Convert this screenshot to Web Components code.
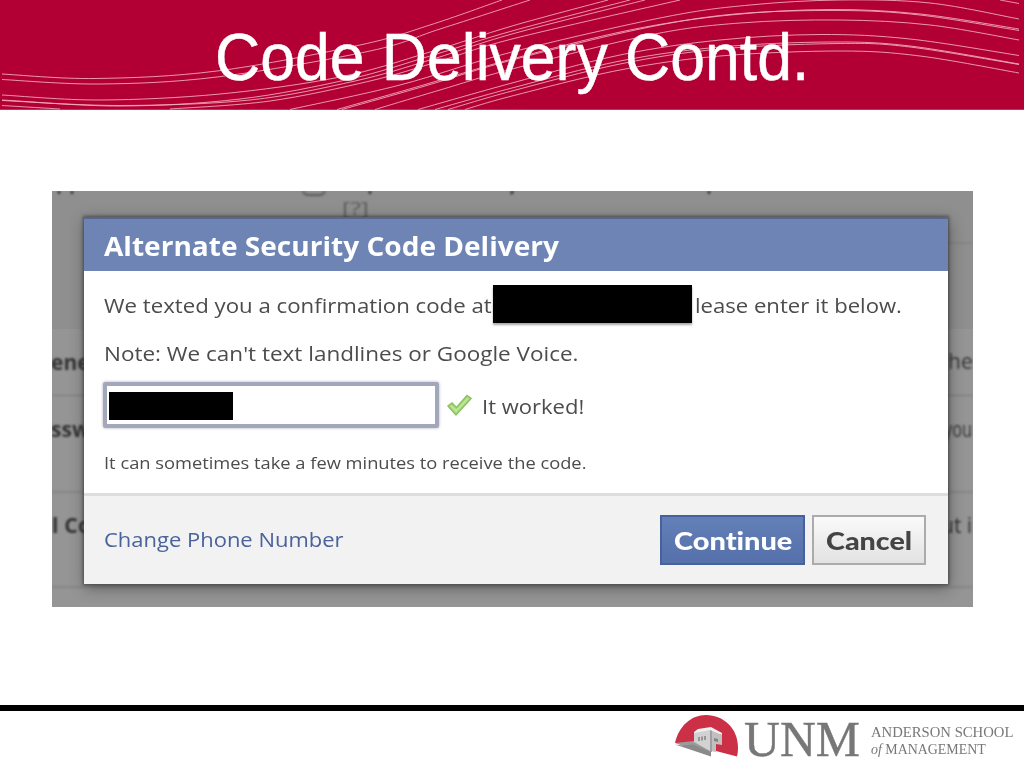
<!DOCTYPE html>
<html lang="en">
<head>
<meta charset="utf-8">
<title>Code Delivery Contd.</title>
<style>
    body {
        margin: 0;
        background: #fff;
        font-family: "Liberation Sans", Arial, sans-serif;
    }
</style>
</head>
<body>
<slide-page>
    <slide-banner slot="banner"><fit-line width="594">Code Delivery Contd.</fit-line></slide-banner>
    <screen-capture>
        <code-dialog>
            <fit-line slot="title" width="455">Alternate Security Code Delivery</fit-line>
            <fb-button slot="actions" kind="confirm"><fit-line width="118">Continue</fit-line></fb-button>
            <fb-button slot="actions"><fit-line width="86">Cancel</fit-line></fb-button>
        </code-dialog>
    </screen-capture>
    <school-logo slot="footer"></school-logo>
</slide-page>

<script>
class SlidePage extends HTMLElement {
    constructor() {
        super();
        this.attachShadow({mode: 'open'}).innerHTML = `
            <style>
                :host {
                    display: flex;
                    flex-direction: column;
                    width: 1024px;
                    height: 768px;
                    overflow: hidden;
                    background: #fff;
                }

                main {
                    flex: 1;
                    padding: 81px 51px 0 52px;
                }

                footer {
                    box-sizing: border-box;
                    height: 63px;
                    border-top: 6px solid #000;
                    display: flex;
                    justify-content: flex-end;
                }
            </style>
            <slot name="banner"></slot>
            <main><slot></slot></main>
            <footer><slot name="footer"></slot></footer>
        `;
    }
}

// Curves of the banner, each a list of points that the stroke runs through
const STRANDS = [
    [2, 74, 95, 78.5, 217, 71, 360, 45, 430, 25, 502, 0],
    [2, 79.5, 100, 84, 217, 77, 370, 51, 440, 29, 530, 0],
    [2, 95, 100, 100, 220, 94, 340, 77, 430, 52, 512, 26, 608, 0],
    [2, 100, 120, 106, 240, 99, 350, 79, 430, 56, 512, 31, 630, 0],
    [2, 100.5, 120, 105.5, 250, 100, 355, 81, 430, 60, 512, 34, 645, 0],
    [2, 105.5, 60, 109],
    [170, 109, 270, 101, 370, 81, 440, 61, 512, 39, 680, 0],
    [290, 109.5, 400, 85, 512, 52, 665, 17, 750, 5, 840, 0, 930, 3, 1019, 19],
    [337, 109.5, 420, 86, 512, 59, 630, 30, 730, 15, 830, 9.5, 920, 14, 1019, 29],
    [342, 109.5, 425, 86, 512, 60, 640, 29, 735, 14, 840, 10.5, 920, 15, 1019, 30.5],
    [375, 109.5, 440, 90, 512, 69, 650, 35, 740, 23, 840, 20, 930, 25, 1019, 40],
    [418, 109.5, 512, 83, 620, 55, 720, 40, 820, 34.5, 910, 39, 1019, 55.5],
    [435, 109.5, 512, 88, 620, 61, 720, 47, 830, 42, 910, 46, 1019, 64],
    [448, 109.5, 512, 91, 620, 64, 720, 49, 840, 43.5, 910, 47, 1019, 64.5],
    [465, 109.5, 512, 96, 620, 70, 720, 56, 840, 51, 920, 56, 1019, 73],
    [1000, 0, 1019, 3.5]
];

function smoothPath(flat) {
    const pts = [];
    for (let i = 0; i < flat.length; i += 2) pts.push([flat[i], flat[i + 1]]);
    let d = `M${pts[0]}`;
    for (let i = 0; i < pts.length - 1; i++) {
        const p0 = pts[i - 1] || pts[i];
        const p1 = pts[i];
        const p2 = pts[i + 1];
        const p3 = pts[i + 2] || p2;
        const c1 = [p1[0] + (p2[0] - p0[0]) / 6, p1[1] + (p2[1] - p0[1]) / 6];
        const c2 = [p2[0] - (p3[0] - p1[0]) / 6, p2[1] - (p3[1] - p1[1]) / 6];
        d += `C${c1} ${c2} ${p2}`;
    }
    return d;
}

class SlideBanner extends HTMLElement {
    constructor() {
        super();
        this.attachShadow({mode: 'open'}).innerHTML = `
            <style>
                :host {
                    display: grid;
                    height: 110px;
                    background: linear-gradient(#b20035 109px, #c4335c 109px);
                    overflow: hidden;
                }

                svg, h1 {
                    grid-area: 1 / 1;
                }

                path {
                    fill: none;
                    stroke: #f5b0c0;
                    stroke-width: 1;
                    opacity: .85;
                }

                h1 {
                    position: relative;
                    margin: 0;
                    padding-top: 19px;
                    text-align: center;
                    font-size: 66px;
                    font-weight: normal;
                    line-height: 76px;
                    color: #fff;
                    -webkit-text-stroke: .5px #fff;
                }
            </style>
            <svg width="1024" height="110" viewBox="0 0 1024 110">
                ${STRANDS.map(s => `<path d="${smoothPath(s)}"/>`).join('')}
            </svg>
            <h1><slot></slot></h1>
        `;
    }
}

class ScreenCapture extends HTMLElement {
    constructor() {
        super();
        this.attachShadow({mode: 'open'}).innerHTML = `
            <style>
                :host {
                    display: grid;
                    width: 921px;
                    height: 416px;
                    overflow: hidden;
                    background: #8e8f8e;
                    font-family: "Open Sans", sans-serif;
                }

                svg, .front {
                    grid-area: 1 / 1;
                }

                .front {
                    position: relative;
                    padding: 26px 25px 23px 32px;
                    display: grid;
                }

                text {
                    font-size: 21px;
                    fill: #333;
                }

                .strong {
                    font-weight: bold;
                }

                .page {
                    filter: blur(.8px);
                }
            </style>
            <svg width="921" height="416" viewBox="0 0 921 416">
                <rect y="138" width="921" height="278" fill="#959595"/>
                <g class="page">
                    <path d="M0 204.500H921M0 301H921M0 396H921M890 52H921" stroke="#828282" stroke-width="1.500"/>
                    <path d="M7 0v3M20 0v3M318 0v3M461 0l-2 3M657 0v3" stroke="#333" stroke-width="2.500"/>
                    <path d="M251 0q1 4 6 4h10q5 0 6-4" fill="none" stroke="#5a5a5a" stroke-width="2"/>
                    <text x="290" y="24" textLength="27" lengthAdjust="spacingAndGlyphs" style="font-size:19px;fill:#5c5c5c">[?]</text>
                    <text class="strong" x="-1" y="179">ene</text>
                    <text class="strong" x="-1" y="246">ssw</text>
                    <text class="strong" x="0" y="342" textLength="39">l Co</text>
                    <text x="896" y="178">he</text>
                    <text x="892" y="246" textLength="28" lengthAdjust="spacingAndGlyphs">you</text>
                    <text x="889" y="342" xml:space="preserve">ut i</text>
                </g>
            </svg>
            <div class="front"><slot></slot></div>
        `;
    }
}

class CodeDialog extends HTMLElement {
    constructor() {
        super();
        this.attachShadow({mode: 'open'}).innerHTML = `
            <style>
                :host {
                    display: flex;
                    flex-direction: column;
                    background: #fff;
                    color: #4c4c4c;
                    font-size: 20.5px;
                    box-shadow: 0 0 3px 1px rgba(40, 40, 40, .6), 1px 4px 14px rgba(30, 30, 30, .45);
                }

                fit-line, .check, ::slotted(fit-line) {
                    filter: blur(.6px);
                }

                header {
                    box-sizing: border-box;
                    height: 54px;
                    padding: 3px 20px 0;
                    border-top: 2px solid #56678f;
                    background: #6d84b4;
                    color: #fff;
                    font-size: 27px;
                    font-weight: bold;
                    line-height: 48px;
                }

                section {
                    flex: 1;
                    display: flex;
                    flex-direction: column;
                    align-items: flex-start;
                    padding: 14px 19px 0;
                }

                .row {
                    display: flex;
                    align-items: center;
                    white-space: nowrap;
                }

                .row fit-line {
                    padding-top: 2px;
                }

                .sent {
                    height: 38px;
                    padding-left: 1px;
                }

                .phone {
                    width: 199px;
                    height: 38px;
                    background: #000;
                    box-shadow: 0 2px 2px rgba(0, 0, 0, .35);
                }

                .sent fit-line + .phone {
                    margin-left: 1px;
                }

                .sent .phone + fit-line {
                    margin-left: 3px;
                }

                .note {
                    height: 24px;
                    margin-top: 17px;
                    padding-left: 1px;
                }

                .entry {
                    margin-top: 18px;
                }

                .field {
                    box-sizing: border-box;
                    width: 336px;
                    height: 46px;
                    padding: 6px 2px;
                    border: 4px solid #a2a8b9;
                    border-radius: 2px;
                    box-shadow: 0 0 3px #aab;
                }

                .typed {
                    width: 124px;
                    height: 28px;
                    background: #000;
                }

                .check {
                    margin: 0 10px 0 8px;
                }

                .hint {
                    height: 24px;
                    margin-top: 21px;
                    padding-left: 1px;
                    font-size: 17px;
                }

                footer {
                    box-sizing: border-box;
                    height: 91px;
                    padding: 0 22px 1px 20px;
                    border-top: 3px solid #dedede;
                    background: #f2f2f2;
                    display: flex;
                    align-items: center;
                    gap: 7px;
                }

                a {
                    margin: 0 auto 1px 0;
                    color: #4a639c;
                }
            </style>
            <header><slot name="title"></slot></header>
            <section>
                <div class="row sent">
                    <fit-line width="388">We texted you a confirmation code at</fit-line>
                    <span class="phone"></span>
                    <fit-line width="207">lease enter it below.</fit-line>
                </div>
                <div class="row note"><fit-line width="475">Note: We can't text landlines or Google Voice.</fit-line></div>
                <div class="row entry">
                    <div class="field"><div class="typed"></div></div>
                    <svg class="check" width="25" height="24" viewBox="0 0 25 24">
                        <path d="M1 13l4-3 4.500 4.500L20 2.500l4 3L9 22z" fill="#a8dc7c" stroke="#8cc063" stroke-width="1.500"/>
                        <path d="M4 13l5 5L21 5.500" fill="none" stroke="#c0ea9c" stroke-width="1.500"/>
                    </svg>
                    <fit-line width="102">It worked!</fit-line>
                </div>
                <div class="row hint"><fit-line width="482">It can sometimes take a few minutes to receive the code.</fit-line></div>
            </section>
            <footer>
                <a><fit-line width="239">Change Phone Number</fit-line></a>
                <slot name="actions"></slot>
            </footer>
        `;
    }
}

class FbButton extends HTMLElement {
    constructor() {
        super();
        this.attachShadow({mode: 'open'}).innerHTML = `
            <style>
                :host {
                    box-sizing: border-box;
                    display: flex;
                    align-items: center;
                    justify-content: center;
                    width: 114px;
                    height: 50px;
                    border: 2px solid #ababab;
                    background: linear-gradient(#fafafa, #e2e2e2);
                    color: #444;
                    font: 900 25px/44px Lato, sans-serif;
                    font-variant-ligatures: none;
                }

                :host([kind="confirm"]) {
                    width: 145px;
                    border-color: #46619d;
                    background: linear-gradient(#6480b8, #5570aa);
                    color: #fff;
                }

                ::slotted(fit-line) {
                    filter: blur(.6px);
                }
            </style>
            <slot></slot>
        `;
    }
}

class SchoolLogo extends HTMLElement {
    constructor() {
        super();
        this.attachShadow({mode: 'open'}).innerHTML = `
            <style>
                :host {
                    display: flex;
                    width: 349px;
                    font-family: "Liberation Serif", serif;
                    color: #777;
                }

                .unm {
                    margin-left: 5px;
                    font-size: 51px;
                    line-height: 56px;
                    -webkit-text-stroke: .4px #777;
                }

                .school {
                    margin: 13px 0 0 11px;
                    font-size: 15px;
                    line-height: 17px;
                }

                svg {
                    flex: none;
                    margin-top: 3px;
                    filter: blur(.3px);
                }
            </style>
            <svg width="64" height="54" viewBox="0 0 64 54">
                <path d="M0 29C4 12 16 1 31 1c18 0 32 14 32 32 0 4-.3 7-1 9.500L41 37 30 30z" fill="#cb3046"/>
                <path d="M0 29l19-2 17 9v6z" fill="#9b9b9b"/>
                <path d="M0 30.500l8 1 10-1 18 7.500v4.500z" fill="#8a8a8a"/>
                <path d="M19 18l4-3 13-2 11 6v2l-11-3-17 2z" fill="#f0f0f0"/>
                <path d="M19 19l16-3v21l-16-9z" fill="#d2d2d2"/>
                <path d="M35 16l12 5v10l-6-1v8l-6-1z" fill="#c0c0c0"/>
                <path d="M35 16l2 1v21h-2z" fill="#a0a0a0"/>
                <path d="M24 23v4M27 22.500v4M30 22v4" stroke="#777" stroke-width="1.300"/>
                <path d="M39 24l4 1v3l-4-1z" fill="#858585"/>
            </svg>
            <div class="unm"><fit-line width="116">UNM</fit-line></div>
            <div class="school">
                <div><fit-line width="142">ANDERSON SCHOOL</fit-line></div>
                <div><fit-line width="115"><i>of</i> MANAGEMENT</fit-line></div>
            </div>
        `;
    }
}

// One line of text, stretched or narrowed to span the given width
class FitLine extends HTMLElement {
    constructor() {
        super();
        this.attachShadow({mode: 'open'}).innerHTML = `
            <style>
                :host {
                    display: inline-block;
                    white-space: nowrap;
                    text-align: left;
                }

                span {
                    display: inline-block;
                    transform-origin: 0 50%;
                }
            </style>
            <span><slot></slot></span>
        `;
    }

    connectedCallback() {
        const line = this.shadowRoot.querySelector('span');
        const width = Number(this.getAttribute('width'));
        const scale = width / line.offsetWidth;
        this.style.width = `${width}px`;
        line.style.transform = `scaleX(${scale})`;
    }
}

customElements.define('slide-page', SlidePage);
customElements.define('slide-banner', SlideBanner);
customElements.define('screen-capture', ScreenCapture);
customElements.define('code-dialog', CodeDialog);
customElements.define('fb-button', FbButton);
customElements.define('school-logo', SchoolLogo);
customElements.define('fit-line', FitLine);
</script>
</body>
</html>
